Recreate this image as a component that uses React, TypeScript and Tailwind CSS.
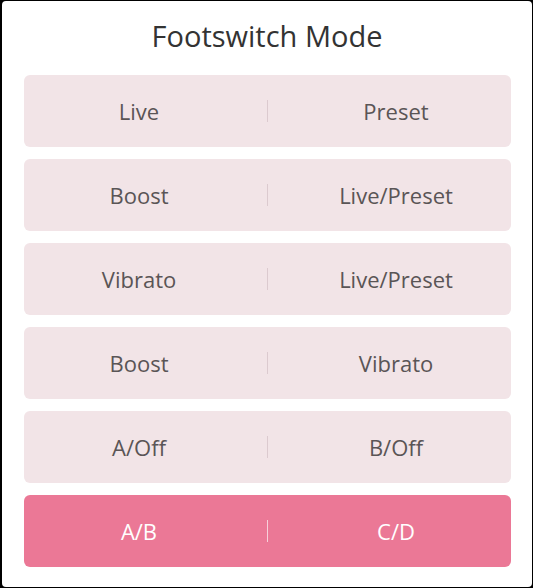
const MODES: { left: string; right: string; active?: boolean }[] = [
  { left: "Live", right: "Preset" },
  { left: "Boost", right: "Live/Preset" },
  { left: "Vibrato", right: "Live/Preset" },
  { left: "Boost", right: "Vibrato" },
  { left: "A/Off", right: "B/Off" },
  { left: "A/B", right: "C/D", active: true },
];

export default function App() {
  return (
    <div className="w-[533px] h-[588px] bg-black pl-[2px] pt-[1px] pr-[1px] pb-[1px]">
      <div
        className="h-full bg-white rounded-[4px] flex flex-col"
        style={{ fontFamily: '"Open Sans", "Noto Sans", sans-serif' }}
      >
        <h1 className="h-[74px] flex items-center justify-center text-[29px] text-[#333333] pb-[4px]">
          Footswitch Mode
        </h1>
        <div className="flex flex-col gap-[12px] pl-[22px] pr-[21px]">
          {MODES.map((m, i) => (
            <button
              key={i}
              className={`h-[72px] rounded-[6px] flex items-center text-[22px] ${
                m.active ? "bg-[#eb7896] text-white" : "bg-[#f2e4e7] text-[#5a5556]"
              }`}
            >
              <span className="flex-1 text-center">{m.left}</span>
              <span
                className={`w-px h-[22px] mx-[13px] ${m.active ? "bg-[#f7d0da]" : "bg-[#dccacf]"}`}
              />
              <span className="flex-1 text-center">{m.right}</span>
            </button>
          ))}
        </div>
      </div>
    </div>
  );
}
